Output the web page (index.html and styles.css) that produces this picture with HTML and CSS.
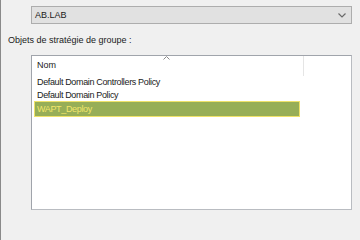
FILE: index.html
```html
<!DOCTYPE html>
<html lang="fr">
<head>
  <meta charset="UTF-8">
  <title>Objets de stratégie de groupe</title>
  <link rel="stylesheet" href="styles.css">
</head>
<body>

  <div class="panel">
    <div class="combo">
      <span>AB.LAB</span>
      <svg class="chevron" width="8" height="5" viewBox="0 0 8 5">
        <path d="M0.5 0.5 L4 4 L7.5 0.5" fill="none" stroke="#6a6a6a" stroke-width="1.2"/>
      </svg>
    </div>

    <div class="label">Objets de stratégie de groupe :</div>

    <div class="list">
      <div class="list-header">
        <div class="col-name">
          Nom
          <svg class="sort" width="7" height="4" viewBox="0 0 7 4">
            <path d="M0.5 3.5 L3.5 0.5 L6.5 3.5" fill="none" stroke="#8a8a8a" stroke-width="1"/>
          </svg>
        </div>
        <div class="col-rest"></div>
      </div>
      <div class="row">Default Domain Controllers Policy</div>
      <div class="row">Default Domain Policy</div>
      <div class="row selected">WAPT_Deploy</div>
    </div>
  </div>

</body>
</html>
```

FILE: styles.css
```css
body {
  margin: 0;
  width: 360px;
  height: 240px;
  background-color: #f0f0f0;
  font-family: "Liberation Sans", Arial, sans-serif;
  font-size: 9px;
  color: #1a1a1a;
  border-left: 1px solid #8a8a8a;
  box-sizing: border-box;
  overflow: hidden;
}

.panel {
  padding: 6px 8px 0 7px;
}

.combo {
  margin-left: 23px;
  height: 18px;
  box-sizing: border-box;
  background-color: #e1e1e1;
  border: 1px solid #adadad;
  display: flex;
  align-items: center;
  justify-content: space-between;
  padding: 0 5px 0 3px;
}

.chevron {
  margin-top: 1px;
}

.label {
  margin-top: 10px;
  height: 13px;
  line-height: 13px;
}

.list {
  margin-left: 23px;
  margin-top: 8px;
  height: 155px;
  box-sizing: border-box;
  background-color: #fff;
  border: 1px solid #a0a4ab;
  border-right-color: #b9bcc1;
  border-bottom-color: #b9bcc1;
}

.list-header {
  display: flex;
  height: 20px;
}

.col-name {
  position: relative;
  width: 266px;
  padding-left: 5px;
  line-height: 18px;
  border-right: 1px solid #e5e5e5;
}

.sort {
  position: absolute;
  left: 131px;
  top: 0;
}

.col-rest {
  flex: 1;
}

.row {
  height: 13px;
  line-height: 13px;
  padding-left: 5px;
  width: 266px;
  box-sizing: border-box;
  letter-spacing: -0.35px;
}

.row.selected {
  margin-left: 2px;
  margin-top: -1px;
  height: 16px;
  line-height: 15px;
  padding-left: 2px;
  background-color: #97ae57;
  border: 1px solid #efe26a;
  color: #f3e66a;
}
```
